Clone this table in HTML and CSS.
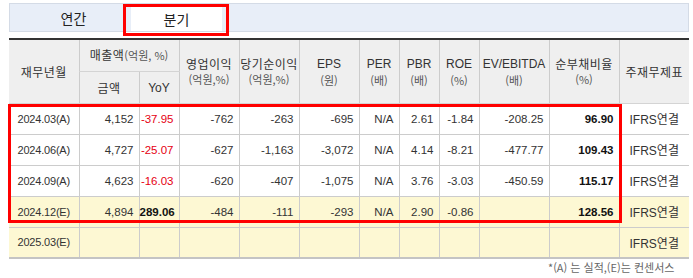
FILE: index.html
```html
<!DOCTYPE html>
<html lang="ko">
<head>
<meta charset="utf-8">
<link rel="stylesheet" href="styles.css">
</head>
<body>
<div class="wrap">
  <div class="tabs">
    <div class="tab">연간</div>
    <div class="tab on">분기</div>
  </div>
  <table class="fin">
    <colgroup>
      <col class="w70"><col class="w60"><col class="w40"><col class="w60"><col class="w60"><col class="w60">
      <col class="w40"><col class="w40"><col class="w40"><col class="w70"><col class="w70"><col class="w70">
    </colgroup>
    <thead>
      <tr class="h1">
        <th rowspan="2">재무년월</th>
        <th colspan="2" class="sub">매출액<small>(억원, %)</small></th>
        <th rowspan="2">영업이익<br><small>(억원,%)</small></th>
        <th rowspan="2">당기순이익<br><small>(억원,%)</small></th>
        <th rowspan="2"><span class="en">EPS</span><br><small>(원)</small></th>
        <th rowspan="2"><span class="en">PER</span><br><small>(배)</small></th>
        <th rowspan="2"><span class="en">PBR</span><br><small>(배)</small></th>
        <th rowspan="2"><span class="en">ROE</span><br><small>(%)</small></th>
        <th rowspan="2"><span class="en">EV/EBITDA</span><br><small>(배)</small></th>
        <th rowspan="2">순부채비율<br><small>(%)</small></th>
        <th rowspan="2" class="last">주재무제표</th>
      </tr>
      <tr class="h2">
        <th>금액</th>
        <th><span class="en">YoY</span></th>
      </tr>
    </thead>
    <tbody>
      <tr>
        <td class="c">2024.03(A)</td><td>4,152</td><td class="red">-37.95</td><td>-762</td><td>-263</td><td>-695</td>
        <td>N/A</td><td>2.61</td><td>-1.84</td><td>-208.25</td><td class="b">96.90</td><td class="c last">IFRS연결</td>
      </tr>
      <tr>
        <td class="c">2024.06(A)</td><td>4,727</td><td class="red">-25.07</td><td>-627</td><td>-1,163</td><td>-3,072</td>
        <td>N/A</td><td>4.14</td><td>-8.21</td><td>-477.77</td><td class="b">109.43</td><td class="c last">IFRS연결</td>
      </tr>
      <tr>
        <td class="c">2024.09(A)</td><td>4,623</td><td class="red">-16.03</td><td>-620</td><td>-407</td><td>-1,075</td>
        <td>N/A</td><td>3.76</td><td>-3.03</td><td>-450.59</td><td class="b">115.17</td><td class="c last">IFRS연결</td>
      </tr>
      <tr class="est">
        <td class="c">2024.12(E)</td><td>4,894</td><td class="b">289.06</td><td>-484</td><td>-111</td><td>-293</td>
        <td>N/A</td><td>2.90</td><td>-0.86</td><td></td><td class="b">128.56</td><td class="c last">IFRS연결</td>
      </tr>
      <tr class="est end">
        <td class="c">2025.03(E)</td><td></td><td></td><td></td><td></td><td></td>
        <td></td><td></td><td></td><td></td><td></td><td class="c last">IFRS연결</td>
      </tr>
    </tbody>
  </table>
  <p class="note">*(A) 는 실적,(E)는 컨센서스</p>
  <div class="hl hl-tab"></div>
  <div class="hl hl-rows"></div>
</div>
</body>
</html>
```

FILE: styles.css
```css
* { box-sizing: border-box; }
html, body { margin: 0; padding: 0; background: #fff; }
body {
  font-family: "Noto Sans CJK KR", "Liberation Sans", sans-serif;
  color: #333;
  overflow: hidden;
}
.wrap {
  position: relative;
  width: 693px;
  height: 278px;
  padding: 3px 0 0 9px;
}
.tabs {
  display: flex;
  align-items: flex-end;
  width: 680px;
  height: 29px;
  background: #e8eef8;
  border: 1px solid #d4dbe6;
}
.tab {
  width: 121px;
  height: 27px;
  display: flex;
  align-items: center;
  justify-content: center;
  font-size: 14px;
  color: #222;
  padding-left: 6px;
}
.tab.on {
  width: 91px;
  height: 25px;
  background: #fff;
  padding: 1px 0 0 0;
}
.fin {
  margin-top: 6px;
  width: 680px;
  table-layout: fixed;
  border-collapse: collapse;
  border-top: 2px solid #333;
}
.w70 { width: 70px; }
.w60 { width: 60px; }
.w40 { width: 40px; }
.fin th {
  background: #efefef;
  font-weight: normal;
  font-size: 12px;
  color: #333;
  border-left: 1px solid #ccc;
  border-bottom: 1px solid #d4d4d4;
  padding: 0;
  line-height: 15px;
  letter-spacing: 0.5px;
  text-align: center;
}
.fin th:first-child { border-left: none; }
.fin .h1 th { height: 32px; }
.fin .h2 th { height: 32px; }
.fin .h2 th:first-child { border-left: 1px solid #ccc; }
.fin th small {
  font-size: 11px;
  color: #555;
  letter-spacing: 0;
}
.fin th .en {
  font-family: "Liberation Sans", sans-serif;
  font-size: 12px;
  letter-spacing: 0;
}
.fin td {
  height: 31px;
  padding: 0 5px 0 0;
  border-left: 1px solid #ccc;
  border-bottom: 1px solid #ccc;
  font-family: "Liberation Sans", sans-serif;
  font-size: 11.5px;
  color: #333;
  text-align: right;
  white-space: nowrap;
}
.fin td:first-child { border-left: none; }
.fin td.c {
  text-align: center;
  padding: 0;
  font-size: 11px;
  letter-spacing: -0.2px;
}
.fin td.last { font-family: "Liberation Sans", "Noto Sans CJK KR", sans-serif; font-size: 12px; letter-spacing: 0; }
.fin td.red { color: #e60012; }
.fin td.b { font-weight: bold; color: #111; }
.fin tr.est td { background: #fdf8d3; }
.fin tr.end td { border-bottom: 2px solid #c4c4c4; }
.note {
  margin: 0;
  position: absolute;
  left: 548px;
  top: 259px;
  white-space: nowrap;
  font-size: 11px;
  color: #666;
}
.hl {
  position: absolute;
  border: 3px solid #f00;
}
.hl-tab {
  left: 123px;
  top: 4px;
  width: 106px;
  height: 32px;
}
.hl-rows {
  left: 8px;
  top: 104px;
  width: 614px;
  height: 119px;
}
```
